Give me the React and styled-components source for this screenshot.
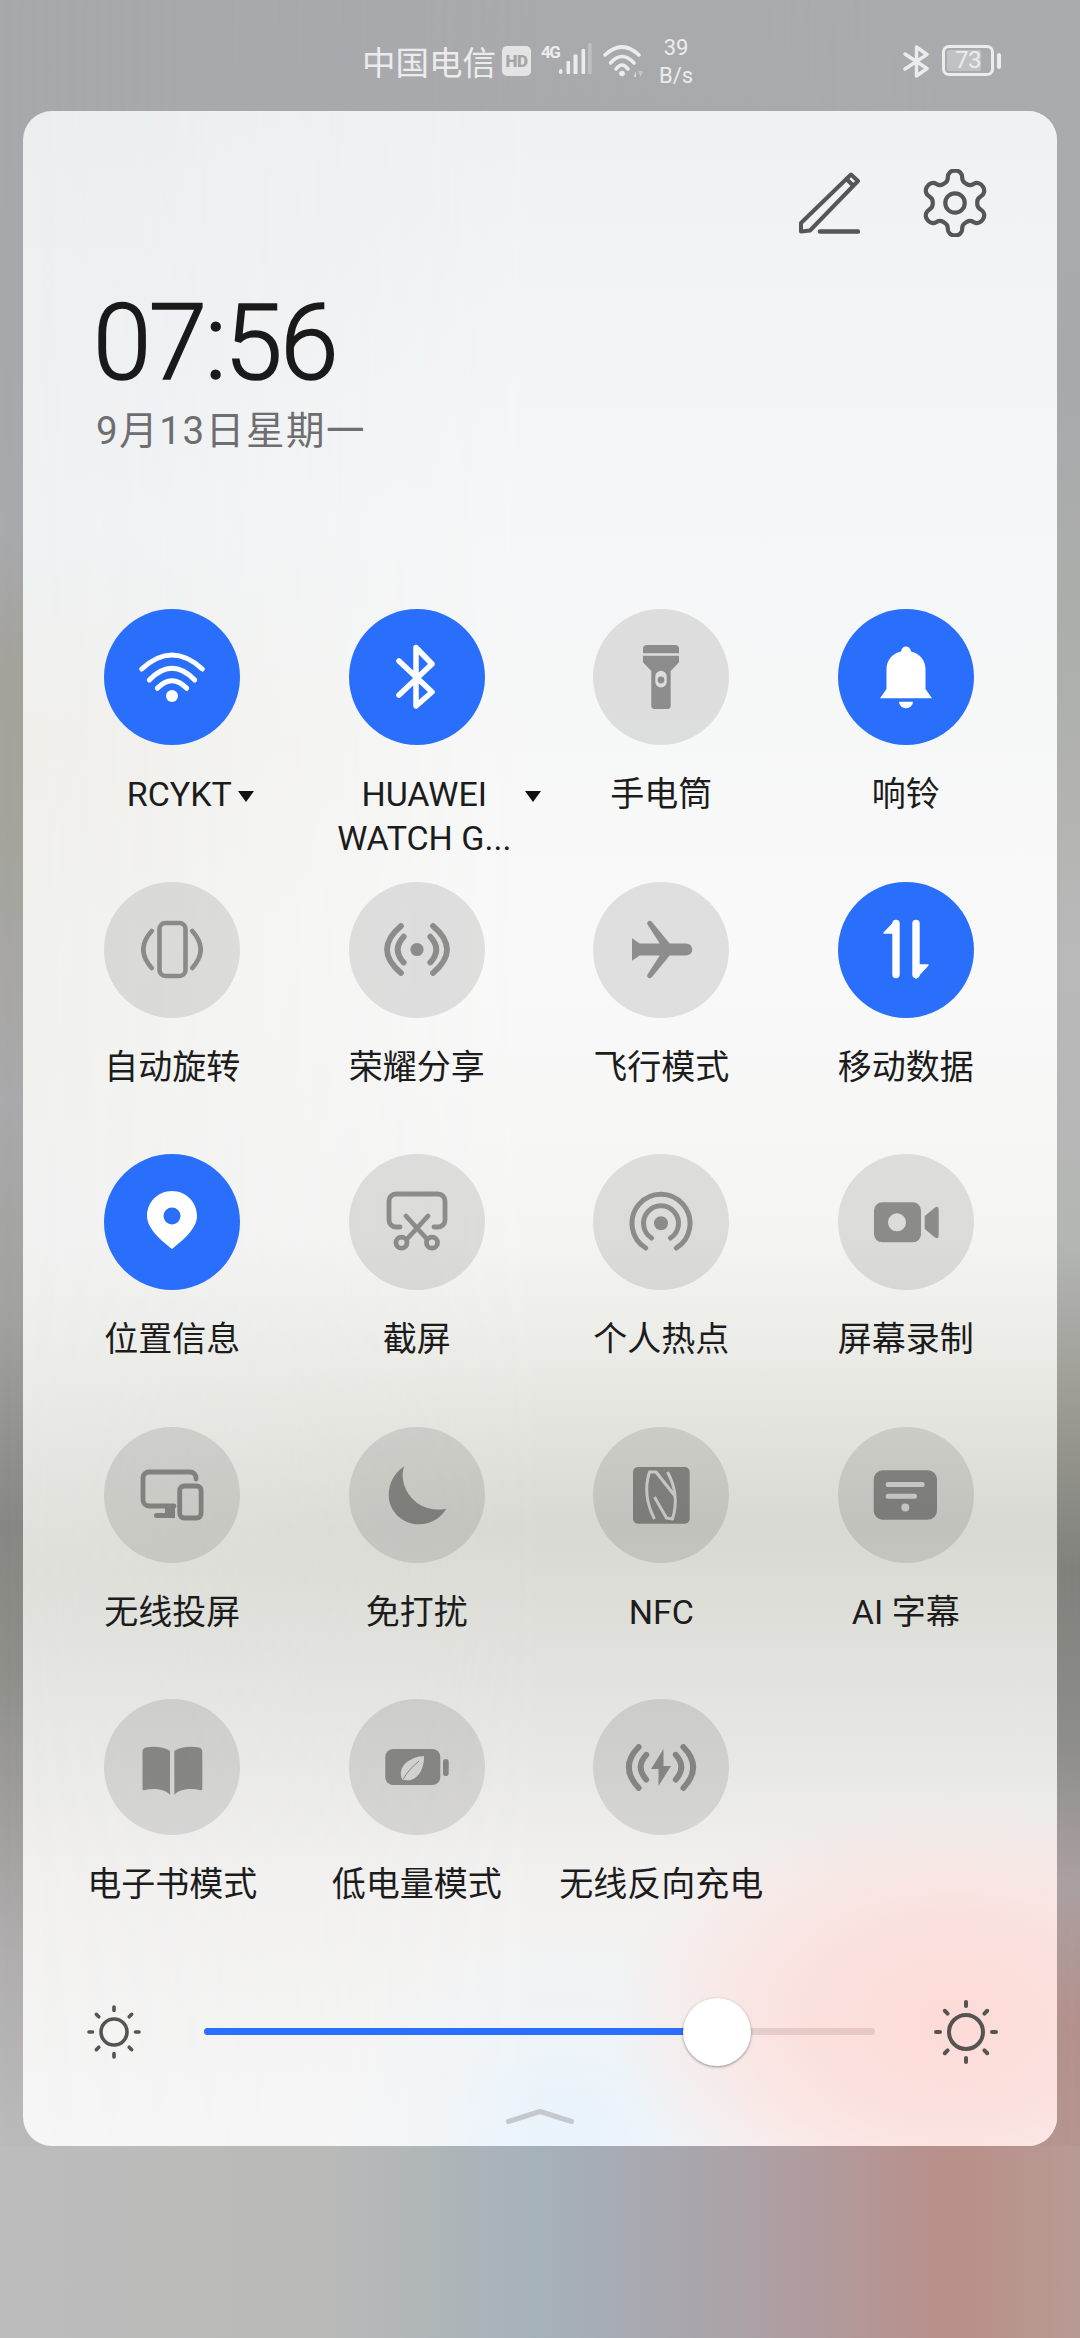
import React from "react";
import styled, { createGlobalStyle } from "styled-components";

const Global = createGlobalStyle`
  html, body { margin: 0; padding: 0; background: #a8aaad; }
  body { width: 1080px; height: 2338px; overflow: hidden; font-family: Roboto, "Noto Sans CJK SC", sans-serif; }
`;

const Screen = styled.div`
  position: relative;
  width: 1080px;
  height: 2338px;
  overflow: hidden;
  display: flex;
  flex-direction: column;
  background: linear-gradient(180deg, #a8a9ac 0, #a7a8ab 330px, #a9aaad 530px, #a3a29b 671px, #a4a49c 814px, #aaa9ab 1100px, #a2a29f 1313px, #878883 1527px, #8f8f8a 1670px, #b0aeaf 1955px, #bbbbbb 2146px);
  &::before {
    content: "";
    position: absolute;
    inset: 0;
    background: linear-gradient(180deg, #a9abaf 0, #a8a9ab 385px, #adafab 671px, #b9b9b9 956px, #b4b6b4 1242px, #9f9f97 1385px, #81817c 1570px, #8d8d89 1740px, #aaa0a0 1884px, #b3908b 2027px, #b89a94 2338px);
    mask-image: linear-gradient(90deg, transparent 0, #000 100%);
  }
`;

const StatusBar = styled.div`
  position: relative;
  height: 111px;
  flex: none;
  box-sizing: border-box;
  padding: 34px 79px 0 362px;
  display: flex;
  align-items: flex-start;
  justify-content: space-between;
  color: #ececec;
`;
const StatusGroup = styled.div`
  display: flex;
  align-items: flex-start;
`;
const Carrier = styled.span`
  font-size: 33.5px;
  line-height: 53px;
  font-family: "Noto Sans CJK SC", sans-serif;
  white-space: nowrap;
  width: 140px;
`;
const HdBadge = styled.span`
  width: 29px;
  height: 30px;
  margin-top: 12px;
  border-radius: 5px;
  background: #e4e4e5;
  color: #a3a5a8;
  font: 900 17px/30px Roboto, sans-serif;
  text-align: center;
  letter-spacing: -0.5px;
`;
const SignalWrap = styled.div`
  position: relative;
  width: 51px;
  height: 40px;
  margin: 9px 0 0 10px;
`;
const Mini4G = styled.span`
  position: absolute;
  left: 0;
  top: 0;
  font: 700 17px/18px Roboto, sans-serif;
  letter-spacing: -1.5px;
`;
const Speed = styled.div`
  width: 34px;
  margin-left: 15px;
  font: 400 22px/27.5px Roboto, sans-serif;
  text-align: center;
`;
const StatusSvg = styled.svg`
  display: block;
  flex: none;
  margin: ${p => p.$m || 0};
`;
const Battery = styled.div`
  position: relative;
  box-sizing: border-box;
  width: 52px;
  height: 31px;
  margin: 11px 0 0 12px;
  border: 3px solid #ececec;
  border-radius: 7px;
  text-align: center;
  font: 400 24px/25px Roboto, sans-serif;
  letter-spacing: -0.5px;
`;
const BatteryFill = styled.div`
  position: absolute;
  left: 2px;
  top: 2px;
  bottom: 2px;
  border-radius: 2px;
  background: rgba(255, 255, 255, 0.28);
`;
const BatteryText = styled.span`
  position: relative;
`;
const BatteryCap = styled.div`
  width: 4px;
  height: 16px;
  margin: 19px 0 0 3px;
  border-radius: 2px;
  background: #ececec;
`;

const Panel = styled.main`
  position: relative;
  flex: none;
  height: 2035px;
  margin: 0 23px;
  border-radius: 29px;
  overflow: hidden;
  background: linear-gradient(180deg, #eceef0 0, #f0f2f4 417px, #f0efea 631px, #f1f1ef 845px, #f2f2f2 1131px, #ebebe7 1274px, #dfe0da 1459px, #e9e9e6 1629px, #f2f1f0 1773px, #f6f6f6 2035px);
  &::before {
    content: "";
    position: absolute;
    inset: 0;
    background:
      radial-gradient(ellipse 340px 230px at 90% 94%, rgba(253, 219, 215, 1) 0, rgba(253, 219, 215, 0.7) 50%, rgba(253, 219, 215, 0) 100%),
      radial-gradient(ellipse 230px 220px at 52% 100%, rgba(232, 243, 252, 1), rgba(232, 243, 252, 0)),
      linear-gradient(180deg, #eff1f3 0, #f5f6f7 417px, #f9f9f9 845px, #f4f5f3 1131px, #e8e8e3 1274px, #d9d9d3 1416px, #e6e6e3 1629px, #f2f1f0 1773px, #f6f6f6 2035px);
    mask-image: linear-gradient(90deg, transparent 0, #000 50%);
  }
`;
const PanelBody = styled.div`
  position: relative;
`;
const Toolbar = styled.div`
  display: flex;
  justify-content: flex-end;
  align-items: center;
  gap: 61px;
  padding: 58px 68.5px 0 0;
`;
const ClockBlock = styled.div`
  padding: 52px 0 0 70px;
  height: 372px;
  box-sizing: border-box;
`;
const Clock = styled.div`
  font: 300 105px/110px Roboto, sans-serif;
  color: #1a1a1a;
  letter-spacing: -2.4px;
  -webkit-text-stroke: 1.6px #1a1a1a;
`;
const DateLine = styled.div`
  margin: 6px 0 0 3px;
  font: 400 38.5px/52px Roboto, "Noto Sans CJK SC", sans-serif;
  color: #6e6e70;
  letter-spacing: 1.6px;
`;
const Grid = styled.div`
  display: grid;
  grid-template-columns: repeat(4, 244.5px);
  grid-auto-rows: 272.5px;
  padding-left: 27px;
`;
const Cell = styled.div`
  display: flex;
  flex-direction: column;
  align-items: center;
`;
const Circle = styled.div`
  width: 136px;
  height: 136px;
  flex: none;
  border-radius: 50%;
  background: ${p => (p.$on ? "#2a6ffb" : "rgba(0,0,0,0.1)")};
`;
const Glyph = styled.svg`
  display: block;
  color: ${p => (p.$on ? "#fff" : "#000")};
  opacity: ${p => (p.$on ? 1 : 0.36)};
`;
const Label = styled.div`
  margin-top: 27px;
  font-size: 34px;
  line-height: 44px;
  color: #1c1c1c;
  text-align: center;
  white-space: nowrap;
`;
const DropLabel = styled.div`
  margin-top: 27px;
  display: flex;
  align-items: flex-start;
  gap: ${p => p.$gap}px;
  padding-left: ${p => p.$shift}px;
  font-size: 34px;
  line-height: 44px;
  color: #1c1c1c;
  text-align: center;
  white-space: pre;
`;
const Caret = styled.span`
  flex: none;
  margin-top: 19px;
  width: 0;
  height: 0;
  border-left: 8px solid transparent;
  border-right: 8px solid transparent;
  border-top: 11px solid #111;
`;
const SliderRow = styled.div`
  display: flex;
  align-items: center;
  height: 69px;
  margin-top: 25.5px;
`;
const SunSlot = styled.div`
  width: ${p => p.$w}px;
  display: flex;
  justify-content: center;
  flex: none;
`;
const Track = styled.div`
  position: relative;
  flex: none;
  width: 671px;
  height: 7px;
  border-radius: 4px;
  background: rgba(120, 60, 60, 0.14);
`;
const TrackFill = styled.div`
  height: 100%;
  border-radius: 4px 0 0 4px;
  background: #2a6ffb;
`;
const Thumb = styled.div`
  position: absolute;
  top: 50%;
  width: 68px;
  height: 68px;
  border-radius: 50%;
  background: #fff;
  box-shadow: 0 1px 3px rgba(0, 0, 0, 0.4);
  transform: translate(-50%, -50%);
`;
const Handle = styled.div`
  display: flex;
  justify-content: center;
  margin-top: 43px;
`;
const BottomStrip = styled.div`
  position: relative;
  flex: 1;
  background: linear-gradient(90deg, #bcbcbc 0, #b9bab8 30%, #a5b1b9 50%, #aba2a9 68%, #b98f89 88%, #b89a94 100%);
`;

/* ---------- icons: every glyph is drawn in the 136 x 136 box of its circle ---------- */
const S = ({ w = 5, children }) => (
  <g fill="none" stroke="currentColor" strokeWidth={w} strokeLinecap="round" strokeLinejoin="round">{children}</g>
);
const icons = {
  wifi: () => (
    <g>
      <S w={5}>
        <path d="M37.7 60Q68 32 98.3 60" />
        <path d="M45.3 71Q68 47.6 90.7 71" />
        <path d="M53.3 79.3Q68 64 82.7 79.3" />
      </S>
      <circle cx="68" cy="87" r="6" fill="currentColor" />
    </g>
  ),
  bt: () => (
    <S w={5.5}>
      <path d="M50 52L83 83L67 97V38.5L83 55L50 86" />
    </S>
  ),
  torch: () => (
    <g fill="currentColor">
      <path d="M50 44.3V40a4 4 0 0 1 4-4h28a4 4 0 0 1 4 4v4.3z" />
      <path
        fillRule="evenodd"
        d="M50 46.7h36v6.5L77.7 62v35a3 3 0 0 1-3 3H61.3a3 3 0 0 1-3-3V62L50 53.2zM62.3 67.5v5.2a5.7 5.7 0 0 0 11.4 0v-5.2a5.7 5.7 0 0 0-11.4 0z"
      />
      <circle cx="68" cy="71" r="3.4" />
    </g>
  ),
  bell: () => (
    <g fill="currentColor">
      <path d="M42 89.3L48.5 80V60C48.5 50 56 44 63 42.5C63.5 39 65.5 37.5 68 37.5C70.5 37.5 72.5 39 73 42.5C80 44 87.5 50 87.5 60V80L94 89.3Z" />
      <path d="M61 92.7H75A7 6.6 0 0 1 61 92.7Z" />
    </g>
  ),
  rotate: () => (
    <S w={4.6}>
      <rect x="55.5" y="41" width="26" height="53" rx="6" />
      <path d="M47.7 49Q31 67.5 47.7 86" />
      <path d="M88.3 49Q105 67.5 88.3 86" />
    </S>
  ),
  share: () => (
    <g>
      <S w={5.8}>
        <path d="M54.7 54.7Q42.7 67.5 54.7 80.5" />
        <path d="M81.3 54.7Q93.3 67.5 81.3 80.5" />
        <path d="M52 44Q24 67.5 52 91" />
        <path d="M84 44Q112 67.5 84 91" />
      </S>
      <circle cx="68" cy="67.5" r="6.6" fill="currentColor" />
    </g>
  ),
  plane: () => (
    <path
      fill="currentColor"
      d="M93.3 61.500a6 6 0 0 1 0 12H76.700L58.800 95.200a2.600 2.600 0 0 1-4.600-2.200L66.700 73.500H46.700L39 78.700V56.300L46.700 61.500H66.700L54.200 42a2.600 2.600 0 0 1 4.600-2.200L76.700 61.500z"
    />
  ),
  data: () => (
    <g>
      <S w={7.4}>
        <path d="M58 41.500V92.500" />
        <path d="M78 41.500V92.500" />
      </S>
      <path fill="currentColor" stroke="currentColor" strokeWidth="1.500" strokeLinejoin="round" d="M58 38.500L46 51H58Z" />
      <path fill="currentColor" stroke="currentColor" strokeWidth="1.500" strokeLinejoin="round" d="M78 96L90 83H78Z" />
    </g>
  ),
  pin: () => (
    <path
      fill="currentColor"
      fillRule="evenodd"
      d="M68 37C82 37 93 48 93 62C93 75 78 87 68 95C58 87 43 75 43 62C43 48 54 37 68 37ZM68 53.500A8.500 8.500 0 1 0 68 70.500A8.500 8.500 0 1 0 68 53.500Z"
    />
  ),
  shot: () => (
    <S w={4.8}>
      <path d="M51 73H47a7 7 0 0 1-7-7V47a7 7 0 0 1 7-7H89a7 7 0 0 1 7 7V66a7 7 0 0 1-7 7H85" />
      <path d="M57 62L77 84" />
      <path d="M79 62L59 84" />
      <circle cx="52.500" cy="88.700" r="5.500" />
      <circle cx="83" cy="88.700" r="5.500" />
    </S>
  ),
  hotspot: () => (
    <g>
      <S w={5}>
        <path d="M58.500 84A17.500 17.500 0 1 1 77.500 84" />
        <path d="M52.700 94A29 29 0 1 1 83.300 94" />
      </S>
      <circle cx="68" cy="69.300" r="7" fill="currentColor" />
    </g>
  ),
  video: () => (
    <g fill="currentColor">
      <path
        fillRule="evenodd"
        d="M44 48.300H75a8 8 0 0 1 8 8V80.300a8 8 0 0 1-8 8H44a8 8 0 0 1-8-8V56.300a8 8 0 0 1 8-8ZM59 59.300A9 9 0 1 0 59 77.300A9 9 0 1 0 59 59.300Z"
      />
      <path d="M86.700 62L97 53.500Q100.700 51.500 100.700 55.500V81.500Q100.700 85.500 97 83.500L86.700 75Z" />
    </g>
  ),
  cast: () => (
    <g>
      <S w={4.8}>
        <path d="M92 52V51a6 6 0 0 0-6-6H45a6 6 0 0 0-6 6V73a6 6 0 0 0 6 6H70" />
        <rect x="75.700" y="59" width="21.400" height="32" rx="4.500" />
      </S>
      <path fill="currentColor" d="M61 79H71V91H52.500a2.500 2.500 0 0 1 0-5H61Z" />
    </g>
  ),
  moon: () => (
    <path
      fill="currentColor"
      d="M55.300 39.300C48 58 66 88 97.300 81.700C92 91 82 97.300 70 97.300C53 97.300 39.700 84 39.700 68C39.700 56 46 45 55.300 39.300Z"
    />
  ),
  nfc: () => (
    <g>
      <mask id="nfc-cut">
        <rect width="136" height="136" fill="#fff" />
        <g fill="none" stroke="#000" strokeWidth="3" strokeLinejoin="round">
          <path d="M61.500 92Q49 68 56.500 45L63 45L82 69" />
          <path d="M74.500 45Q87 68 79.500 92L73.500 91L61.500 70" />
        </g>
      </mask>
      <rect x="40" y="40" width="56.700" height="56.700" rx="5" fill="currentColor" mask="url(#nfc-cut)" />
    </g>
  ),
  caption: () => (
    <g>
      <mask id="caption-cut">
        <rect width="136" height="136" fill="#fff" />
        <rect x="47.700" y="55" width="39" height="5" rx="2.500" fill="#000" />
        <rect x="47.700" y="66.700" width="31.300" height="5" rx="2.500" fill="#000" />
        <circle cx="67.300" cy="80.500" r="4" fill="#000" />
      </mask>
      <rect x="35.700" y="43.300" width="63.300" height="49.400" rx="9" fill="currentColor" mask="url(#caption-cut)" />
    </g>
  ),
  book: () => (
    <g fill="currentColor">
      <path d="M66 52C60 48 50 47 42 48.500Q38.500 49 38.500 53V90Q38.500 92 41 91C50 89 60 90 66 95.700Z" />
      <path d="M70.300 52C76.300 48 86.300 47 94.800 48.500Q98.300 49 98.300 53V90Q98.300 92 95.800 91C86.300 89 76.300 90 70.300 95.700Z" />
    </g>
  ),
  leaf: () => (
    <g>
      <mask id="leaf-cut">
        <rect width="136" height="136" fill="#fff" />
        <path d="M53 80.500C48 68 60 58 75 57C75.500 70 68 85 53 80.500Z" fill="#000" />
        <path d="M54 80.500C58 73 63 68 70 62" stroke="#fff" strokeWidth="1" fill="none" />
      </mask>
      <rect x="36.300" y="50" width="55" height="36" rx="8" fill="currentColor" mask="url(#leaf-cut)" />
      <rect x="94" y="60" width="5.700" height="17" rx="2.800" fill="currentColor" />
    </g>
  ),
  reverse: () => (
    <g>
      <S w={5.800}>
        <path d="M53.300 55.700Q42 68 53.300 80.700" />
        <path d="M82.700 55.700Q94 68 82.700 80.700" />
        <path d="M45.700 48Q26 68 45.700 89" />
        <path d="M90.300 48Q110 68 90.300 89" />
      </S>
      <path fill="currentColor" d="M70.500 50L58 70H65.500V87L78 67H70.500Z" />
    </g>
  ),
};

const Icon = ({ name, on }) => {
  const Draw = icons[name];
  return (
    <Glyph $on={on} width="136" height="136" viewBox="0 0 136 136">
      <Draw />
    </Glyph>
  );
};

const Sun = ({ size, ring, inner, outer, w }) => {
  const c = size / 2;
  return (
    <svg width={size} height={size} viewBox={`0 0 ${size} ${size}`} fill="none" stroke="#565353" strokeLinecap="round">
      <circle cx={c} cy={c} r={ring} strokeWidth={w} />
      {[0, 45, 90, 135, 180, 225, 270, 315].map(a => {
        const r = (a * Math.PI) / 180;
        return (
          <line
            key={a}
            x1={c + inner * Math.cos(r)}
            y1={c + inner * Math.sin(r)}
            x2={c + outer * Math.cos(r)}
            y2={c + outer * Math.sin(r)}
            strokeWidth={w}
          />
        );
      })}
    </svg>
  );
};

const tiles = [
  { icon: "wifi", on: true, drop: "RCYKT", shift: 36, gap: 6 },
  { icon: "bt", on: true, drop: "HUAWEI\nWATCH G...", shift: 45, gap: 14 },
  { icon: "torch", label: "手电筒" },
  { icon: "bell", on: true, label: "响铃" },
  { icon: "rotate", label: "自动旋转" },
  { icon: "share", label: "荣耀分享" },
  { icon: "plane", label: "飞行模式" },
  { icon: "data", on: true, label: "移动数据" },
  { icon: "pin", on: true, label: "位置信息" },
  { icon: "shot", label: "截屏" },
  { icon: "hotspot", label: "个人热点" },
  { icon: "video", label: "屏幕录制" },
  { icon: "cast", label: "无线投屏" },
  { icon: "moon", label: "免打扰" },
  { icon: "nfc", label: "NFC" },
  { icon: "caption", label: "AI 字幕" },
  { icon: "book", label: "电子书模式" },
  { icon: "leaf", label: "低电量模式" },
  { icon: "reverse", label: "无线反向充电" },
];

const brightness = 76.4;

export default function App() {
  return (
    <Screen>
      <Global />
      <StatusBar>
        <StatusGroup>
          <Carrier>中国电信</Carrier>
          <HdBadge>HD</HdBadge>
          <SignalWrap>
            <Mini4G>4G</Mini4G>
            <StatusSvg width="51" height="32" viewBox="0 0 51 32" fill="#ececec">
              <rect x="18" y="26" width="3.400" height="5" rx="1.700" />
              <rect x="25.500" y="18" width="3.600" height="13" rx="1" />
              <rect x="32.500" y="11.500" width="4" height="19.500" rx="1" />
              <rect x="40.500" y="6" width="3.600" height="25" rx="1" />
              <rect x="47" y="0" width="3.600" height="31" rx="1" opacity="0.35" />
            </StatusSvg>
          </SignalWrap>
          <StatusSvg $m="10px 0 0 10px" width="42" height="34" viewBox="0 0 42 34" fill="none" stroke="#ececec" strokeWidth="3.600" strokeLinecap="round">
            <path d="M3 11Q20 -5 37 11" />
            <path d="M8.500 19Q20 6 32 19" />
            <path d="M14 25Q20 17 26 25" />
            <circle cx="20" cy="29.500" r="2.800" fill="#ececec" stroke="none" />
            <path d="M32 33L34 27V33Z" fill="#ececec" stroke="none" opacity="0.8" />
            <path d="M36 27H41L38.500 33Z" fill="#ececec" stroke="none" opacity="0.4" />
          </StatusSvg>
          <Speed>39<br />B/s</Speed>
        </StatusGroup>
        <StatusGroup>
          <StatusSvg $m="11px 0 0 0" width="27" height="33" viewBox="0 0 27 33" fill="none" stroke="#ececec" strokeWidth="3.400" strokeLinejoin="round" strokeLinecap="round">
            <path d="M2 9L24 23.500L13.500 31V2L24 9.500L2 24" />
          </StatusSvg>
          <Battery>
            <BatteryFill style={{ width: "73%" }} />
            <BatteryText>73</BatteryText>
          </Battery>
          <BatteryCap />
        </StatusGroup>
      </StatusBar>

      <Panel>
        <PanelBody>
          <Toolbar>
            <svg width="61" height="62" viewBox="0 0 61 62" fill="none" stroke="#565656" strokeWidth="4" strokeLinejoin="round" strokeLinecap="round">
              <path d="M2 59.500V51L52 2.500L59 9L11 58.500Z" />
              <path d="M47.500 7L54 13.500" />
              <path d="M21 59.500H59" strokeWidth="4.500" />
            </svg>
            <svg width="68" height="68" viewBox="1.500 1.500 21 21" fill="none" stroke="#565656" strokeWidth="1.300" strokeLinejoin="round" strokeLinecap="round">
              <path d="M12.220 2h-.44a2 2 0 0 0-2 2v.18a2 2 0 0 1-1 1.730l-.43.25a2 2 0 0 1-2 0l-.15-.08a2 2 0 0 0-2.730.73l-.22.38a2 2 0 0 0 .73 2.730l.15.1a2 2 0 0 1 1 1.720v.51a2 2 0 0 1-1 1.740l-.15.09a2 2 0 0 0-.73 2.730l.22.38a2 2 0 0 0 2.730.73l.15-.08a2 2 0 0 1 2 0l.43.25a2 2 0 0 1 1 1.730V20a2 2 0 0 0 2 2h.44a2 2 0 0 0 2-2v-.18a2 2 0 0 1 1-1.730l.43-.25a2 2 0 0 1 2 0l.15.08a2 2 0 0 0 2.730-.73l.22-.39a2 2 0 0 0-.73-2.730l-.15-.08a2 2 0 0 1-1-1.740v-.5a2 2 0 0 1 1-1.740l.15-.09a2 2 0 0 0 .73-2.730l-.22-.38a2 2 0 0 0-2.730-.73l-.15.08a2 2 0 0 1-2 0l-.43-.25a2 2 0 0 1-1-1.730V4a2 2 0 0 0-2-2z" />
              <circle cx="12" cy="12" r="3" />
            </svg>
          </Toolbar>
          <ClockBlock>
            <Clock>07:56</Clock>
            <DateLine>9月13日星期一</DateLine>
          </ClockBlock>
          <Grid>
            {tiles.map(t => (
              <Cell key={t.icon}>
                <Circle $on={t.on}>
                  <Icon name={t.icon} on={t.on} />
                </Circle>
                {t.drop ? (
                  <DropLabel $shift={t.shift} $gap={t.gap}>
                    <span>{t.drop}</span>
                    <Caret />
                  </DropLabel>
                ) : (
                  <Label>{t.label}</Label>
                )}
              </Cell>
            ))}
          </Grid>
          <SliderRow>
            <SunSlot $w={181}>
              <Sun size={54} ring={13} inner={21.5} outer={25} w={3.6} />
            </SunSlot>
            <Track>
              <TrackFill style={{ width: `${brightness}%` }} />
              <Thumb style={{ left: `${brightness}%` }} />
            </Track>
            <SunSlot $w={182}>
              <Sun size={66} ring={17} inner={26} outer={30} w={4} />
            </SunSlot>
          </SliderRow>
          <Handle>
            <svg width="68" height="15" viewBox="0 0 68 15" fill="none" stroke="#c5c9cd" strokeWidth="5" strokeLinecap="round" strokeLinejoin="round">
              <path d="M2.500 12.500L34 2.500L65.500 12.500" />
            </svg>
          </Handle>
        </PanelBody>
      </Panel>
      <BottomStrip />
    </Screen>
  );
}
